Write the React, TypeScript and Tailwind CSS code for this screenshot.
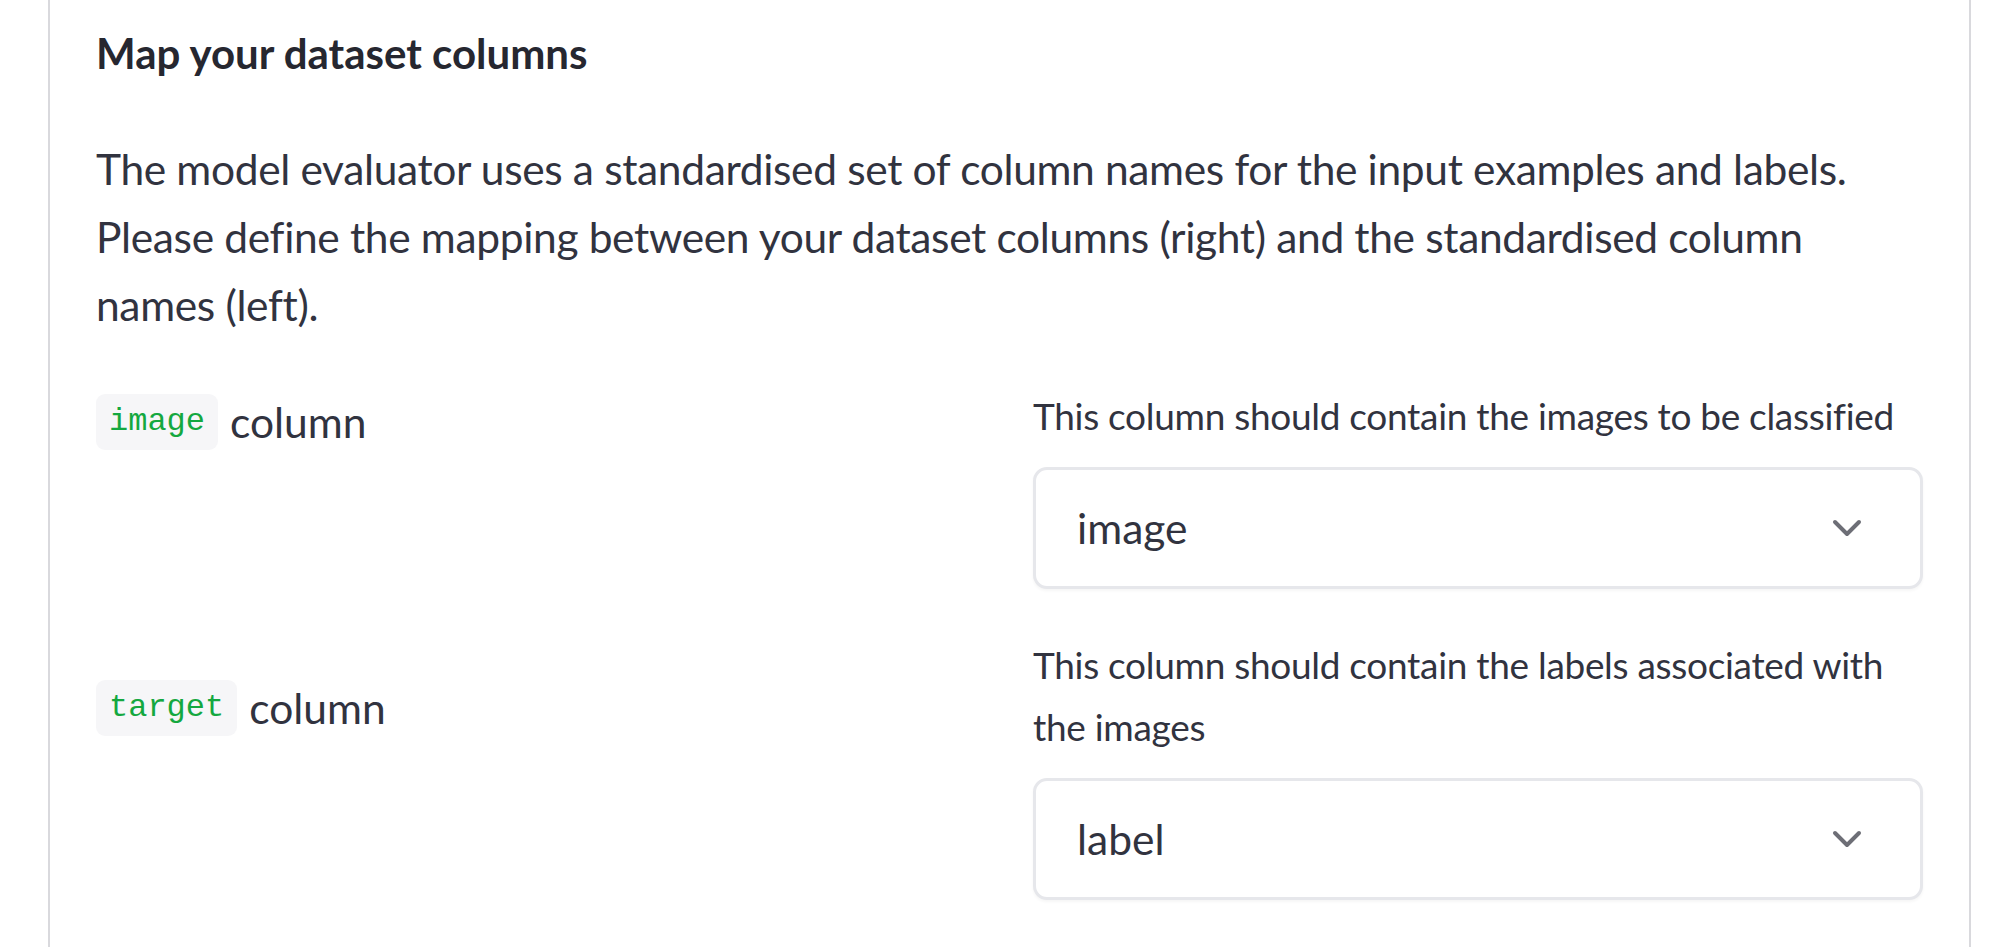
import { ReactNode } from 'react'

const ROWS = [
  {
    code: 'image',
    help: 'This column should contain the images to be classified',
    value: 'image',
    offset: 'pt-0',
  },
  {
    code: 'target',
    help: 'This column should contain the labels associated with the images',
    value: 'label',
    offset: 'pt-[37px]',
  },
]

function Code({ children }: { children: ReactNode }) {
  return (
    <span className="inline-block align-middle rounded-[9px] bg-[#f6f6f8] px-[13px] py-[10px] font-['Liberation_Mono',monospace] text-[32px] leading-[36px] text-[#14a83f]">
      {children}
    </span>
  )
}

function Chevron() {
  return (
    <svg width="30" height="18" viewBox="0 0 30 18" fill="none" className="shrink-0">
      <path d="M3 3l12 12 12-12" stroke="#6d6e76" strokeWidth="4" strokeLinecap="round" strokeLinejoin="round" />
    </svg>
  )
}

export default function App() {
  return (
    <div className="h-[947px] w-[1999px] overflow-hidden bg-white font-['Lato',sans-serif] text-[#31333f]">
      <div className="ml-[48px] h-full w-[1923px] border-x-2 border-[#d9d9dd] px-[46px] pt-[28px]">
        <h3 className="text-[42px] font-bold leading-[51px] text-[#262730]">Map your dataset columns</h3>

        <p className="mt-[56px] text-[42.5px] leading-[68px] tracking-[-0.35px]">
          The model evaluator uses a standardised set of column names for the input examples and labels.
          Please define the mapping between your dataset columns (right) and the standardised column names
          (left).
        </p>

        <div className="mt-[46px] flex flex-col gap-[45px]">
          {ROWS.map((row) => (
            <div key={row.code} className="grid grid-cols-2 gap-x-[47px]">
              {/* standardised name */}
              <div className={`${row.offset} -mt-[2px] text-[42.5px] leading-[68px]`}>
                <Code>{row.code}</Code>
                <span className="ml-[12px] align-middle">column</span>
              </div>

              {/* dataset column picker */}
              <div>
                <p className="text-[37px] leading-[62px] tracking-[-0.3px]">{row.help}</p>
                <div className="mt-[20px] flex h-[122px] items-center justify-between rounded-[14px] border-[3px] border-[#e6e7eb] bg-white pl-[41px] pr-[58px] shadow-[0_2px_3px_rgba(0,0,0,0.04)]">
                  <span className="text-[42.5px] leading-none">{row.value}</span>
                  <Chevron />
                </div>
              </div>
            </div>
          ))}
        </div>
      </div>
    </div>
  )
}
